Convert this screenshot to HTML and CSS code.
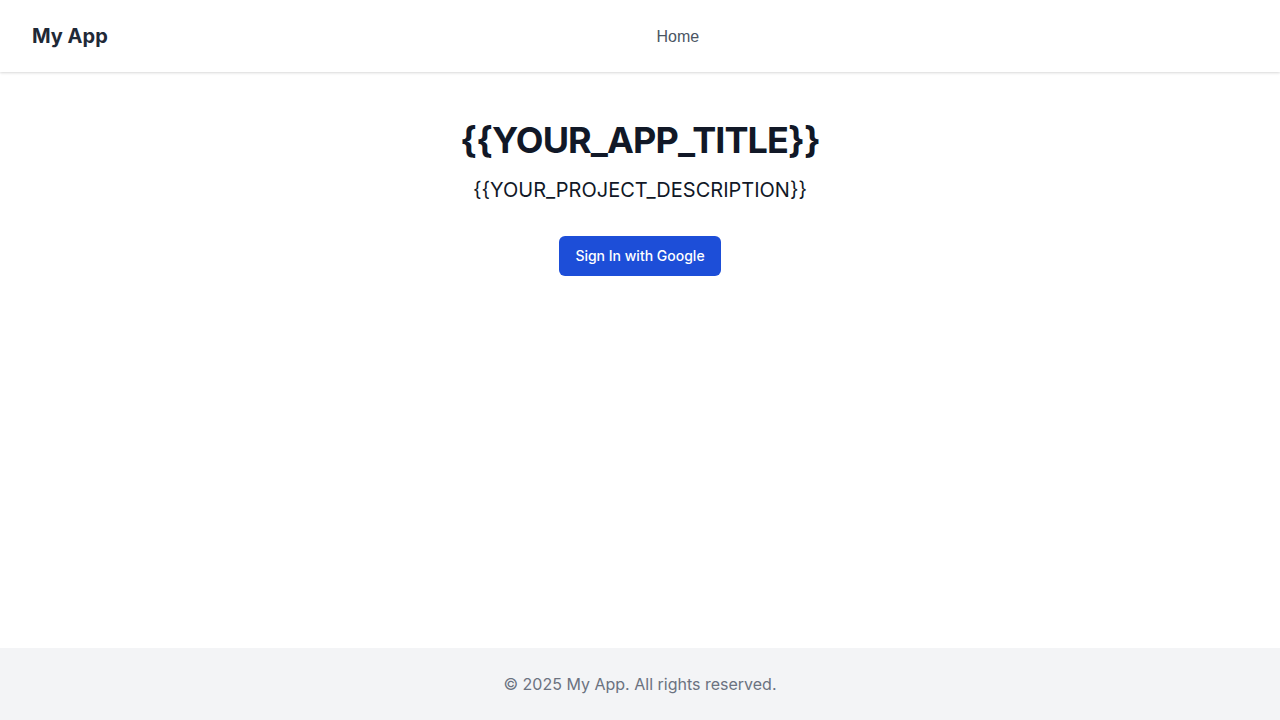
FILE: index.html
```html
<!DOCTYPE html>
<html lang="en">
<head>
<meta charset="utf-8">
<title>My App</title>
<link rel="stylesheet" href="styles.css">
</head>
<body>
<div class="page">
  <header class="header">
    <div class="logo">My App</div>
    <nav class="nav"><a href="#" class="nav-link">Home</a></nav>
    <div class="spacer"></div>
  </header>
  <main class="main">
    <h1 class="title">{{YOUR_APP_TITLE}}</h1>
    <p class="desc">{{YOUR_PROJECT_DESCRIPTION}}</p>
    <button class="btn">Sign In with Google</button>
  </main>
  <footer class="footer">© 2025 My App. All rights reserved.</footer>
</div>
</body>
</html>
```

FILE: styles.css
```css
* { box-sizing: border-box; }
html, body { margin: 0; padding: 0; }
body {
  font-family: Inter, "Noto Sans", sans-serif;
  background: #ffffff;
  color: #111827;
}
.page {
  min-height: 100vh;
  display: flex;
  flex-direction: column;
}
.header {
  height: 72px;
  display: flex;
  align-items: center;
  justify-content: space-between;
  padding: 0 32px;
  background: #ffffff;
  box-shadow: 0 1px 3px rgba(0,0,0,0.1), 0 1px 2px rgba(0,0,0,0.06);
  position: relative;
  z-index: 1;
}
.logo {
  font-size: 20px;
  line-height: 28px;
  font-weight: 700;
  color: #1f2937;
}
.nav {
  padding-top: 2px;
}
.nav-link {
  font-family: "Liberation Sans", Arial, sans-serif;
  font-size: 16px;
  line-height: 24px;
  color: #4b5563;
  text-decoration: none;
}
.spacer { width: 0; }
.main {
  flex: 1;
  display: flex;
  flex-direction: column;
  align-items: center;
  padding-top: 48px;
}
.title {
  margin: 0 0 16px;
  font-size: 36px;
  line-height: 40px;
  font-weight: 700;
  letter-spacing: -0.025em;
  color: #111827;
}
.desc {
  margin: 0 0 32px;
  font-size: 20px;
  line-height: 28px;
  color: #111827;
}
.btn {
  font-family: Inter, sans-serif;
  font-size: 14px;
  line-height: 20px;
  font-weight: 500;
  color: #ffffff;
  background: #1d4ed8;
  border: none;
  border-radius: 6px;
  padding: 10px 16px;
  cursor: pointer;
}
.footer {
  background: #f3f4f6;
  padding: 24px 0;
  text-align: center;
  font-size: 16px;
  line-height: 24px;
  color: #6b7280;
}
```
